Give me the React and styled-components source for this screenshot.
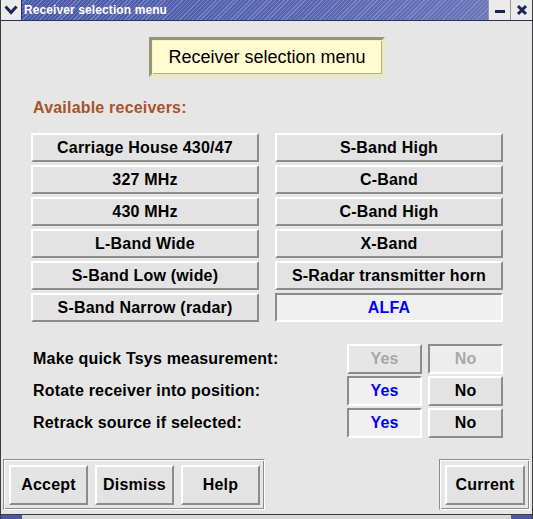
import React from 'react'
import styled, { createGlobalStyle } from 'styled-components'

const GlobalStyle = createGlobalStyle`
  html, body {
    margin: 0;
    padding: 0;
    background: #e6e6e6;
  }
  body {
    font-family: "Liberation Sans", Arial, sans-serif;
  }
`

const leftReceivers = [
  'Carriage House 430/47',
  '327 MHz',
  '430 MHz',
  'L-Band Wide',
  'S-Band Low (wide)',
  'S-Band Narrow (radar)',
]

const rightReceivers = [
  'S-Band High',
  'C-Band',
  'C-Band High',
  'X-Band',
  'S-Radar transmitter horn',
]

const options = [
  { label: 'Make quick Tsys measurement:', yes: 'disabled', no: 'disabledSunken' },
  { label: 'Rotate receiver into position:', yes: 'selected', no: 'normal' },
  { label: 'Retrack source if selected:', yes: 'selected', no: 'normal' },
]

const App = () => {
  return (
    <>
      <GlobalStyle />
      <Window>
        <TitleBar>
          <MenuBox>
            <svg width="14" height="10" viewBox="0 0 14 10">
              <path d="M1.5 1.5 L7 7.5 L12.5 1.5" fill="none" stroke="#1c2457" strokeWidth="3" />
            </svg>
          </MenuBox>
          <TitleStrip>
            <TitleText>Receiver selection menu</TitleText>
          </TitleStrip>
          <WinButton>
            <svg width="12" height="12" viewBox="0 0 12 12">
              <rect x="1" y="6" width="10" height="3" fill="#1c2457" />
            </svg>
          </WinButton>
          <WinButton>
            <svg width="12" height="12" viewBox="0 0 12 12">
              <path d="M2 2 L10 10 M10 2 L2 10" stroke="#1c2457" strokeWidth="3" />
            </svg>
          </WinButton>
        </TitleBar>

        <Body>
          <HeaderBox>Receiver selection menu</HeaderBox>
          <SectionLabel>Available receivers:</SectionLabel>

          <ReceiverGrid>
            {leftReceivers.map((name) => (
              <ReceiverButton key={name}>{name}</ReceiverButton>
            ))}
            {rightReceivers.map((name) => (
              <ReceiverButton key={name}>{name}</ReceiverButton>
            ))}
            <ReceiverButton $selected>ALFA</ReceiverButton>
          </ReceiverGrid>

          <OptionGrid>
            {options.map((opt) => (
              <React.Fragment key={opt.label}>
                <OptionLabel>{opt.label}</OptionLabel>
                <ToggleButton $state={opt.yes}>Yes</ToggleButton>
                <ToggleButton $state={opt.no}>No</ToggleButton>
              </React.Fragment>
            ))}
          </OptionGrid>
        </Body>

        <BottomBar>
          <GroupFrame>
            <ActionButton>Accept</ActionButton>
            <ActionButton>Dismiss</ActionButton>
            <ActionButton>Help</ActionButton>
          </GroupFrame>
          <GroupFrame>
            <ActionButton $wide>Current</ActionButton>
          </GroupFrame>
        </BottomBar>

        <FrameBottom>
          <Corner />
          <Corner />
        </FrameBottom>
      </Window>
    </>
  )
}

const Window = styled.div`
  width: 533px;
  height: 519px;
  box-sizing: border-box;
  display: flex;
  flex-direction: column;
  background: #e6e6e6;
  border-left: 1px solid #3c3c3c;
  border-right: 1px solid #3c3c3c;
  overflow: hidden;
`

const TitleBar = styled.div`
  height: 20px;
  flex: none;
  display: flex;
  border-bottom: 1px solid #2a3060;
`

const MenuBox = styled.div`
  width: 20px;
  display: flex;
  align-items: center;
  justify-content: center;
  background: #ebebeb;
  border-right: 1px solid #2a3060;
`

const TitleStrip = styled.div`
  flex: 1;
  display: flex;
  align-items: center;
  padding-left: 2px;
  background:
    repeating-linear-gradient(135deg, rgba(255,255,255,0) 0px, rgba(255,255,255,0) 2px, rgba(150,160,215,0.55) 2px, rgba(150,160,215,0.55) 3px),
    linear-gradient(90deg, #4b58a6 0%, #5865ae 60%, #6a76b8 100%);
`

const TitleText = styled.span`
  color: #ffffff;
  font-weight: bold;
  font-size: 12px;
  letter-spacing: 0.1px;
`

const WinButton = styled.div`
  width: 21px;
  display: flex;
  align-items: center;
  justify-content: center;
  background: #ebebeb;
  border-left: 1px solid #9a9a9a;
`

const Body = styled.div`
  flex: 1;
  display: flex;
  flex-direction: column;
  padding: 0 29px 0 30px;
`

const HeaderBox = styled.div`
  align-self: center;
  margin-top: 16px;
  width: 236px;
  height: 40px;
  box-sizing: border-box;
  display: flex;
  align-items: center;
  justify-content: center;
  background: #fffcd2;
  border: 3px solid;
  border-color: #9a9374 #eee9bd #eee9bd #9a9374;
  box-shadow: inset 1px 1px 0 #f6f2c8, inset -1px -1px 0 #b3ad8a;
  font-size: 18px;
  color: #000;
`

const SectionLabel = styled.div`
  margin-top: 22px;
  padding-left: 2px;
  font-size: 16px;
  line-height: 17px;
  font-weight: bold;
  letter-spacing: 0.2px;
  color: #a6532b;
`

const ReceiverGrid = styled.div`
  margin-top: 17px;
  display: grid;
  grid-template-columns: 228px 228px;
  grid-template-rows: repeat(6, 29px);
  grid-auto-flow: column;
  column-gap: 16px;
  row-gap: 3px;
`

const ReceiverButton = styled.div`
  box-sizing: border-box;
  display: flex;
  align-items: center;
  justify-content: center;
  font-size: 16px;
  font-weight: bold;
  letter-spacing: 0.2px;
  border: 2px solid;
  background: ${({ $selected }) => ($selected ? '#f0f0f0' : '#e3e3e3')};
  color: ${({ $selected }) => ($selected ? '#0000ff' : '#000')};
  border-color: ${({ $selected }) =>
    $selected ? '#8c8c8c #ffffff #ffffff #8c8c8c' : '#ffffff #8c8c8c #8c8c8c #ffffff'};
`

const OptionGrid = styled.div`
  margin-top: 22px;
  display: grid;
  grid-template-columns: 1fr 75px 75px;
  grid-auto-rows: 30px;
  column-gap: 6px;
  row-gap: 2px;
`

const OptionLabel = styled.div`
  display: flex;
  align-items: center;
  padding-left: 2px;
  font-size: 16px;
  font-weight: bold;
  letter-spacing: 0.2px;
  color: #000;
`

const toggleLook = {
  normal: { bg: '#e3e3e3', fg: '#000', edge: '#ffffff #8c8c8c #8c8c8c #ffffff' },
  selected: { bg: '#f0f0f0', fg: '#0000ff', edge: '#8c8c8c #ffffff #ffffff #8c8c8c' },
  disabled: { bg: '#e6e6e6', fg: '#a8a8a8', edge: '#ffffff #8c8c8c #8c8c8c #ffffff' },
  disabledSunken: { bg: '#ededed', fg: '#a8a8a8', edge: '#8c8c8c #ffffff #ffffff #8c8c8c' },
}

const ToggleButton = styled.div`
  box-sizing: border-box;
  display: flex;
  align-items: center;
  justify-content: center;
  font-size: 16px;
  font-weight: bold;
  letter-spacing: 0.2px;
  border: 2px solid;
  background: ${({ $state }) => toggleLook[$state].bg};
  color: ${({ $state }) => toggleLook[$state].fg};
  border-color: ${({ $state }) => toggleLook[$state].edge};
`

const BottomBar = styled.div`
  flex: none;
  display: flex;
  justify-content: space-between;
  padding: 0 2px 0 2px;
`

const GroupFrame = styled.div`
  display: flex;
  gap: 7px;
  padding: 5px 4px 4px 5px;
  border: 1px solid;
  border-color: #8c8c8c #ffffff #ffffff #8c8c8c;
  box-shadow: inset 1px 1px 0 #ffffff, inset -1px -1px 0 #8c8c8c;
`

const ActionButton = styled.div`
  width: ${({ $wide }) => ($wide ? '80px' : '79px')};
  height: 40px;
  box-sizing: border-box;
  display: flex;
  align-items: center;
  justify-content: center;
  font-size: 16px;
  font-weight: bold;
  letter-spacing: 0.2px;
  color: #000;
  background: #e3e3e3;
  border: 2px solid;
  border-color: #ffffff #8c8c8c #8c8c8c #ffffff;
`

const FrameBottom = styled.div`
  height: 9px;
  flex: none;
  display: flex;
  justify-content: space-between;
  align-items: flex-end;
  box-sizing: border-box;
  background: linear-gradient(#e6e6e6 0, #e6e6e6 4px, #3c3c3c 4px, #3c3c3c 5px, #d8d8d8 5px);
`

const Corner = styled.div`
  width: 21px;
  height: 4px;
  background: #4b58a6;
`

export default App
